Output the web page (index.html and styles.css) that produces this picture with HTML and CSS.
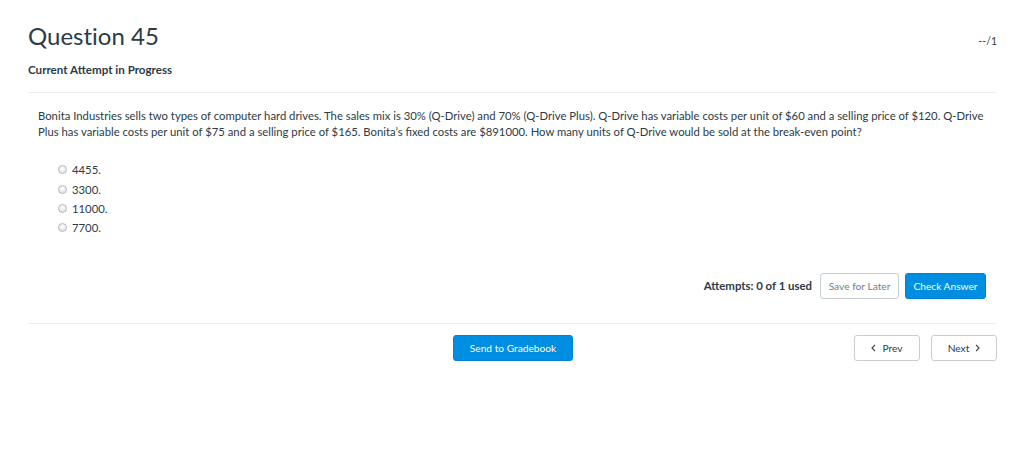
FILE: index.html
```html
<!DOCTYPE html>
<html>
<head>
<meta charset="utf-8">
<link rel="stylesheet" href="styles.css">
</head>
<body>
<div class="page">
  <div class="header">
    <div class="head-left">
      <h1 class="title">Question 45</h1>
      <div class="status">Current Attempt in Progress</div>
    </div>
    <div class="points">--/1</div>
  </div>
  <div class="question">
    <p class="text">Bonita Industries sells two types of computer hard drives. The sales mix is 30% (Q-Drive) and 70% (Q-Drive Plus). Q-Drive has variable costs per unit of $60 and a selling price of $120. Q-Drive Plus has variable costs per unit of $75 and a selling price of $165. Bonita’s fixed costs are $891000. How many units of Q-Drive would be sold at the break-even point?</p>
    <ul class="options">
      <li class="option"><span class="radio"></span><span>4455.</span></li>
      <li class="option"><span class="radio"></span><span>3300.</span></li>
      <li class="option"><span class="radio"></span><span>11000.</span></li>
      <li class="option"><span class="radio"></span><span>7700.</span></li>
    </ul>
    <div class="actions">
      <span class="attempts">Attempts: 0 of 1 used</span>
      <button class="btn btn-light">Save for Later</button>
      <button class="btn btn-primary">Check Answer</button>
    </div>
  </div>
  <div class="footer">
    <div class="footer-center">
      <button class="btn btn-primary btn-send">Send to Gradebook</button>
    </div>
    <div class="nav">
      <button class="btn btn-light btn-nav"><svg class="chev" viewBox="0 0 5 8" width="5" height="8"><path d="M4 0.8 L1 4 L4 7.2" fill="none" stroke="#2d3b45" stroke-width="1.1"/></svg><span>Prev</span></button>
      <button class="btn btn-light btn-nav"><span>Next</span><svg class="chev" viewBox="0 0 5 8" width="5" height="8"><path d="M1 0.8 L4 4 L1 7.2" fill="none" stroke="#2d3b45" stroke-width="1.1"/></svg></button>
    </div>
  </div>
</div>
</body>
</html>
```
FILE: styles.css
```css
* { box-sizing: border-box; }
body {
  margin: 0;
  font-family: Lato, "Open Sans", Arial, sans-serif;
  color: #2d3b45;
  background: #fff;
}
.page {
  padding: 0 27px 0 28px;
}
.header {
  display: flex;
  justify-content: space-between;
  align-items: flex-start;
  border-bottom: 1px solid #eceeef;
  padding-top: 21px;
  height: 93px;
}
.title {
  margin: 0;
  font-size: 24px;
  font-weight: 400;
  line-height: 30px;
  color: #2d3b45;
  font-variant-ligatures: none;
}
.status {
  margin-top: 12px;
  font-size: 11.6px;
  font-weight: 700;
  line-height: 14px;
}
.points {
  font-size: 10.5px;
  margin-top: 14px;
  color: #2d3b45;
}
.question {
  padding: 15px 11px 0 10px;
}
.text {
  margin: 0;
  font-size: 11.3px;
  line-height: 16px;
}
.options {
  list-style: none;
  margin: 20px 0 0 0;
  padding: 0 0 0 20px;
}
.option {
  display: flex;
  align-items: center;
  font-size: 11.3px;
  height: 19.4px;
}
.radio {
  width: 9px;
  height: 9px;
  border-radius: 50%;
  border: 1px solid #b5b8bb;
  background: radial-gradient(circle at 50% 35%, #ffffff 0%, #e9eaeb 60%, #d6d8da 100%);
  margin-right: 5px;
}
.actions {
  display: flex;
  justify-content: flex-end;
  align-items: center;
  margin-top: 35px;
  padding-bottom: 24px;
}
.attempts {
  font-size: 11.4px;
  font-weight: 700;
  margin-right: 8px;
}
.btn {
  font-family: Lato, "Open Sans", Arial, sans-serif;
  font-size: 10.2px;
  height: 26px;
  border-radius: 3px;
  padding: 0;
  white-space: nowrap;
  cursor: pointer;
}
.btn-light {
  background: #fff;
  border: 1px solid #c7cdd1;
  color: #73818c;
}
.btn-primary {
  background: #008ee2;
  border: 1px solid #0084d1;
  color: #fff;
  margin-left: 6px;
  width: 81px;
}
.actions .btn-light { width: 79px; }
.footer {
  display: flex;
  align-items: center;
  border-top: 1px solid #eceeef;
  padding-top: 11px;
}
.footer-center {
  flex: 1;
  padding-left: 425px;
}
.btn-send {
  margin-left: 0;
  width: 120px;
}
.nav {
  display: flex;
  gap: 11px;
}
.btn-nav {
  width: 66px;
  color: #2d3b45;
  display: flex;
  align-items: center;
  justify-content: center;
  gap: 6px;
}
.chev { display: block; }
```
